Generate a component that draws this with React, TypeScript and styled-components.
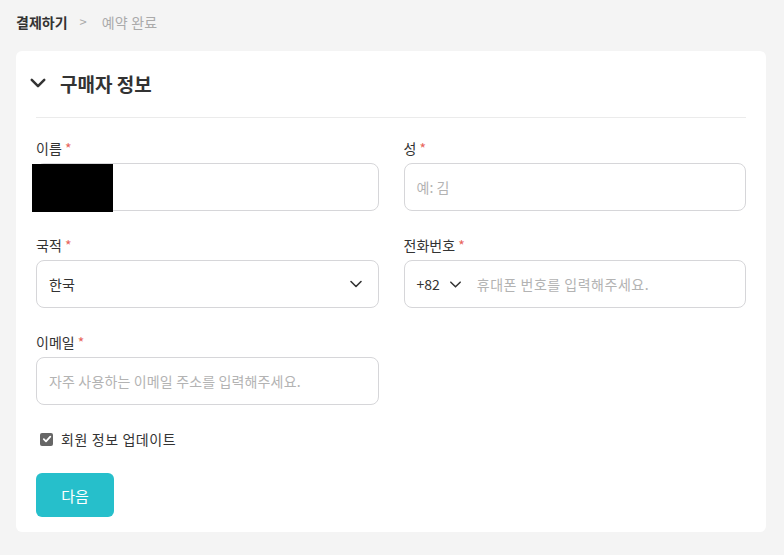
import React from 'react';
import styled, { createGlobalStyle } from 'styled-components';

const GlobalStyle = createGlobalStyle`
	html, body {
		margin: 0;
		padding: 0;
		background: #f4f4f4;
	}
	body {
		font-family: 'Noto Sans CJK KR', 'Noto Sans', sans-serif;
		color: #333;
	}
	* {
		box-sizing: border-box;
	}
`;

const Chevron = ({ size = 14, stroke = 1.6 }) => (
	<svg width={size} height={size} viewBox="0 0 16 16" fill="none">
		<path d="M3 5.5 L8 10.5 L13 5.5" stroke="currentColor" strokeWidth={stroke} strokeLinecap="round" strokeLinejoin="round" />
	</svg>
);

const App: React.FC = () => {
	return (
		<>
			<GlobalStyle />
			<Page>
				<Breadcrumb>
					<Crumb active>결제하기</Crumb>
					<Separator>&gt;</Separator>
					<Crumb>예약 완료</Crumb>
				</Breadcrumb>
				<Card>
					<CardHeader>
						<HeaderIcon>
							<Chevron size={20} stroke={2} />
						</HeaderIcon>
						<Title>구매자 정보</Title>
					</CardHeader>
					<Divider />
					<FormGrid>
						<Field>
							<Label>
								이름 <Req>*</Req>
							</Label>
							<InputBox>
								<Redacted />
							</InputBox>
						</Field>
						<Field>
							<Label>
								성 <Req>*</Req>
							</Label>
							<InputBox>
								<Placeholder>예: 김</Placeholder>
							</InputBox>
						</Field>
						<Field>
							<Label>
								국적 <Req>*</Req>
							</Label>
							<InputBox>
								<Value>한국</Value>
								<SelectArrow>
									<Chevron size={16} />
								</SelectArrow>
							</InputBox>
						</Field>
						<Field>
							<Label>
								전화번호 <Req>*</Req>
							</Label>
							<InputBox>
								<CountryCode>
									+82
									<Chevron size={15} />
								</CountryCode>
								<Placeholder spacing={0.5}>휴대폰 번호를 입력해주세요.</Placeholder>
							</InputBox>
						</Field>
						<Field>
							<Label>
								이메일 <Req>*</Req>
							</Label>
							<InputBox>
								<Placeholder spacing={0.15}>자주 사용하는 이메일 주소를 입력해주세요.</Placeholder>
							</InputBox>
						</Field>
					</FormGrid>
					<CheckRow>
						<CheckBox>
							<svg width="10" height="10" viewBox="0 0 10 10" fill="none">
								<path d="M1.8 5.2 L4 7.3 L8.3 2.6" stroke="#fff" strokeWidth="1.8" strokeLinecap="round" strokeLinejoin="round" />
							</svg>
						</CheckBox>
						<span>회원 정보 업데이트</span>
					</CheckRow>
					<NextButton>다음</NextButton>
				</Card>
			</Page>
		</>
	);
};

const Page = styled.div`
	padding: 12px 18px 0 16px;
`;

const Breadcrumb = styled.div`
	display: flex;
	align-items: center;
	height: 20px;
	font-size: 14px;
	line-height: 20px;
`;

const Crumb = styled.span<{ active?: boolean }>`
	color: ${(props) => (props.active ? '#333' : '#aaa')};
	font-weight: ${(props) => (props.active ? 700 : 400)};
	letter-spacing: ${(props) => (props.active ? 0 : 0.2)}px;
`;

const Separator = styled.span`
	color: #aaa;
	margin: 0 15px 0 12px;
	font-size: 13px;
`;

const Card = styled.div`
	margin-top: 19px;
	background: #fff;
	border-radius: 6px;
	padding: 16px 20px 15px;
`;

const CardHeader = styled.div`
	display: flex;
	align-items: center;
	height: 32px;
	margin-left: -8px;
`;

const HeaderIcon = styled.span`
	display: flex;
	width: 20px;
	color: #333;
	margin-right: 12px;
`;

const Title = styled.h2`
	margin: 0;
	font-size: 19px;
	font-weight: 700;
	color: #333;
`;

const Divider = styled.div`
	height: 1px;
	background: #ebebeb;
	margin-top: 18px;
`;

const FormGrid = styled.div`
	display: grid;
	grid-template-columns: 1fr 1fr;
	column-gap: 25px;
	row-gap: 24px;
	margin-top: 20px;
`;

const Field = styled.div`
	display: flex;
	flex-direction: column;
	gap: 5px;
`;

const Label = styled.label`
	font-size: 14px;
	line-height: 20px;
	color: #333;
`;

const Req = styled.span`
	color: #e8645a;
`;

const InputBox = styled.div`
	position: relative;
	display: flex;
	align-items: center;
	height: 48px;
	border: 1px solid #d6d6d9;
	border-radius: 8px;
	padding: 0 12px;
	font-size: 14px;
`;

const Redacted = styled.div`
	position: absolute;
	left: -5px;
	top: 0;
	width: 81px;
	height: 48px;
	background: #000;
`;

const Placeholder = styled.span<{ spacing?: number }>`
	color: #b3b3b3;
	letter-spacing: ${(props) => props.spacing || 0}px;
`;

const Value = styled.span`
	color: #333;
	flex: 1;
`;

const SelectArrow = styled.span`
	display: flex;
	color: #333;
	margin-right: 2px;
`;

const CountryCode = styled.span`
	display: flex;
	align-items: center;
	gap: 8px;
	color: #333;
	margin-right: 14px;
`;

const CheckRow = styled.label`
	display: flex;
	align-items: center;
	gap: 8px;
	margin-top: 24px;
	margin-left: 4px;
	font-size: 14px;
	line-height: 20px;
	letter-spacing: 0.6px;
	color: #333;
`;

const CheckBox = styled.span`
	display: flex;
	align-items: center;
	justify-content: center;
	width: 13px;
	height: 13px;
	border-radius: 2px;
	background: #666;
`;

const NextButton = styled.button`
	display: block;
	margin-top: 24px;
	width: 78px;
	height: 44px;
	border: none;
	border-radius: 6px;
	background: #26bfcb;
	color: #fff;
	font-family: inherit;
	font-size: 15px;
`;

export default App;
